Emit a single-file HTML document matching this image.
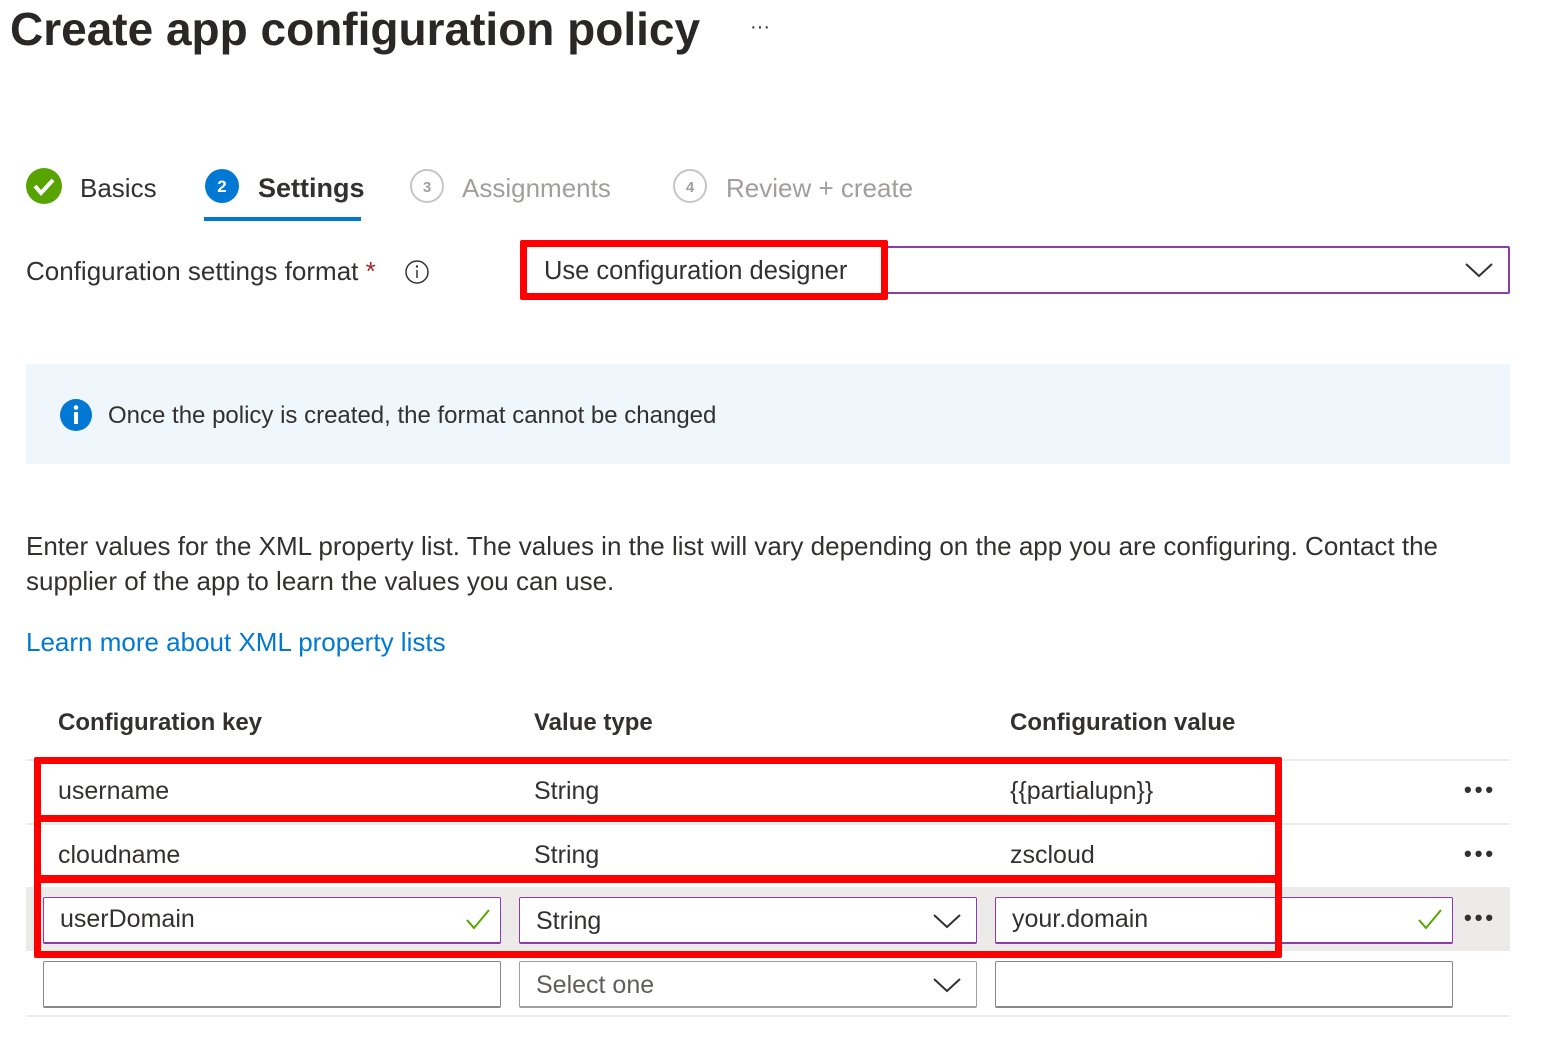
<!DOCTYPE html>
<html><head><meta charset="utf-8"><style>
body{margin:0;width:1566px;height:1046px;background:#fff;font-family:"Liberation Sans",sans-serif;color:#323130;position:relative;overflow:hidden}
.a{position:absolute;white-space:nowrap}
.t{font-size:24px;line-height:28px}
.box{position:absolute;box-sizing:border-box}
.red{border:7px solid #fe0000;border-radius:2px}
.inp{border:1.5px solid #8a3ca8;border-bottom-width:2.5px;border-radius:2px;background:#fff}
.gin{border:1.5px solid #8a8886;border-bottom-width:2.5px;border-radius:2px;background:#fff}
.dots{font-size:22px;letter-spacing:3px;font-weight:bold;color:#323130}
</style></head><body>
<div class="a" style="left:10px;top:2px;font-size:46px;font-weight:bold;line-height:54px;transform:scaleX(1.0);transform-origin:left;color:#292827">Create app configuration policy</div>
<div class="a" style="left:750px;top:16px;font-size:20px;color:#323130">···</div>

<svg class="a" style="left:25px;top:167px" width="38" height="38"><circle cx="19" cy="19" r="18" fill="#57a300"/><path d="M10 19 l6 7 l12 -13" stroke="#fff" stroke-width="4" fill="none"/></svg>
<div class="a t" style="left:80px;top:174px;font-size:26px">Basics</div>
<svg class="a" style="left:204px;top:168px" width="36" height="36"><circle cx="18" cy="18" r="17" fill="#0078d4"/><text x="18" y="24" text-anchor="middle" font-size="17" font-weight="bold" fill="#fff" font-family="Liberation Sans">2</text></svg>
<div class="a t" style="left:258px;top:174px;font-size:27px;font-weight:bold">Settings</div>
<div class="box" style="left:204px;top:217px;width:157px;height:4px;background:#0078d4"></div>
<svg class="a" style="left:409px;top:168px" width="36" height="36"><circle cx="18" cy="18" r="16" fill="none" stroke="#c8c6c4" stroke-width="2"/><text x="18" y="24" text-anchor="middle" font-size="15" font-weight="bold" fill="#a19f9d" font-family="Liberation Sans">3</text></svg>
<div class="a t" style="left:462px;top:174px;font-size:26px;color:#a19f9d">Assignments</div>
<svg class="a" style="left:672px;top:168px" width="36" height="36"><circle cx="18" cy="18" r="16" fill="none" stroke="#c8c6c4" stroke-width="2"/><text x="18" y="24" text-anchor="middle" font-size="15" font-weight="bold" fill="#a19f9d" font-family="Liberation Sans">4</text></svg>
<div class="a t" style="left:726px;top:174px;font-size:26px;color:#a19f9d">Review + create</div>

<div class="a t" style="left:26px;top:257px;font-size:26px">Configuration settings format <span style="color:#a4262c">*</span></div>
<svg class="a" style="left:404px;top:259px" width="26" height="26"><circle cx="13" cy="13" r="11" fill="none" stroke="#323130" stroke-width="1.5"/><line x1="13" y1="11" x2="13" y2="19" stroke="#323130" stroke-width="1.5"/><circle cx="13" cy="7.5" r="1.2" fill="#323130"/></svg>
<div class="box" style="left:522px;top:246px;width:988px;height:48px;border:2px solid #8a3ca8;border-radius:2px"></div>
<svg class="a" style="left:1464px;top:260px" width="30" height="20"><path d="M2 4 L15 16 L28 4" stroke="#323130" stroke-width="2" fill="none"/></svg>
<div class="box red" style="left:520px;top:240px;width:368px;height:60px;background:#fff"></div>
<div class="a t" style="left:544px;top:257px;font-size:25.5px">Use configuration designer</div>

<div class="box" style="left:26px;top:364px;width:1484px;height:100px;background:#eff6fc"></div>
<svg class="a" style="left:59px;top:398px" width="34" height="34"><circle cx="17" cy="17" r="16" fill="#0078d4"/><rect x="15" y="14" width="4" height="12" fill="#fff"/><circle cx="17" cy="9.5" r="2.3" fill="#fff"/></svg>
<div class="a t" style="left:108px;top:402px">Once the policy is created, the format cannot be changed</div>

<div class="a t" style="left:26px;top:532px;font-size:26px">Enter values for the XML property list. The values in the list will vary depending on the app you are configuring. Contact the</div>
<div class="a t" style="left:26px;top:567px;font-size:26px">supplier of the app to learn the values you can use.</div>
<div class="a t" style="left:26px;top:628px;color:#0078d4;font-size:26px">Learn more about XML property lists</div>

<div class="a t" style="left:58px;top:709px;font-weight:bold">Configuration key</div>
<div class="a t" style="left:534px;top:709px;font-weight:bold">Value type</div>
<div class="a t" style="left:1010px;top:709px;font-weight:bold">Configuration value</div>
<div class="box" style="left:26px;top:759px;width:1484px;height:2px;background:#edebe9"></div>
<div class="box" style="left:26px;top:823px;width:1484px;height:2px;background:#edebe9"></div>
<div class="box" style="left:26px;top:887px;width:1484px;height:64px;background:#edebe9"></div>
<div class="box" style="left:26px;top:1015px;width:1484px;height:2px;background:#edebe9"></div>

<div class="a t" style="left:58px;top:777px;font-size:25px">username</div>
<div class="a t" style="left:534px;top:777px;font-size:25px">String</div>
<div class="a t" style="left:1010px;top:777px;font-size:25px">{{partialupn}}</div>
<div class="a dots" style="left:1464px;top:777px">•••</div>
<div class="a t" style="left:58px;top:841px;font-size:25px">cloudname</div>
<div class="a t" style="left:534px;top:841px;font-size:25px">String</div>
<div class="a t" style="left:1010px;top:841px;font-size:25px">zscloud</div>
<div class="a dots" style="left:1464px;top:841px">•••</div>

<div class="box inp" style="left:43px;top:897px;width:458px;height:47px"></div>
<div class="a t" style="left:60px;top:905px;font-size:25px">userDomain</div>
<svg class="a" style="left:464px;top:906px" width="28" height="26"><path d="M3 14 L10 22 L25 4" stroke="#57a300" stroke-width="2" fill="none"/></svg>
<div class="box inp" style="left:519px;top:897px;width:458px;height:47px"></div>
<div class="a t" style="left:536px;top:907px;font-size:25px">String</div>
<svg class="a" style="left:932px;top:911px" width="30" height="20"><path d="M2 4 L15 16 L28 4" stroke="#323130" stroke-width="2" fill="none"/></svg>
<div class="box inp" style="left:995px;top:897px;width:458px;height:47px"></div>
<div class="a t" style="left:1012px;top:905px;font-size:25px">your.domain</div>
<svg class="a" style="left:1416px;top:906px" width="28" height="26"><path d="M3 14 L10 22 L25 4" stroke="#57a300" stroke-width="2" fill="none"/></svg>
<div class="a dots" style="left:1464px;top:905px">•••</div>

<div class="box gin" style="left:43px;top:961px;width:458px;height:47px"></div>
<div class="box gin" style="left:519px;top:961px;width:458px;height:47px;border-color:#a19f9d"></div>
<div class="a t" style="left:536px;top:971px;color:#605e5c;font-size:25px">Select one</div>
<svg class="a" style="left:932px;top:975px" width="30" height="20"><path d="M2 4 L15 16 L28 4" stroke="#323130" stroke-width="2" fill="none"/></svg>
<div class="box gin" style="left:995px;top:961px;width:458px;height:47px"></div>

<div class="box red" style="left:34px;top:757px;width:1248px;height:65px"></div>
<div class="box red" style="left:34px;top:815px;width:1248px;height:68px"></div>
<div class="box red" style="left:34px;top:875px;width:1248px;height:83px"></div>
</body></html>
